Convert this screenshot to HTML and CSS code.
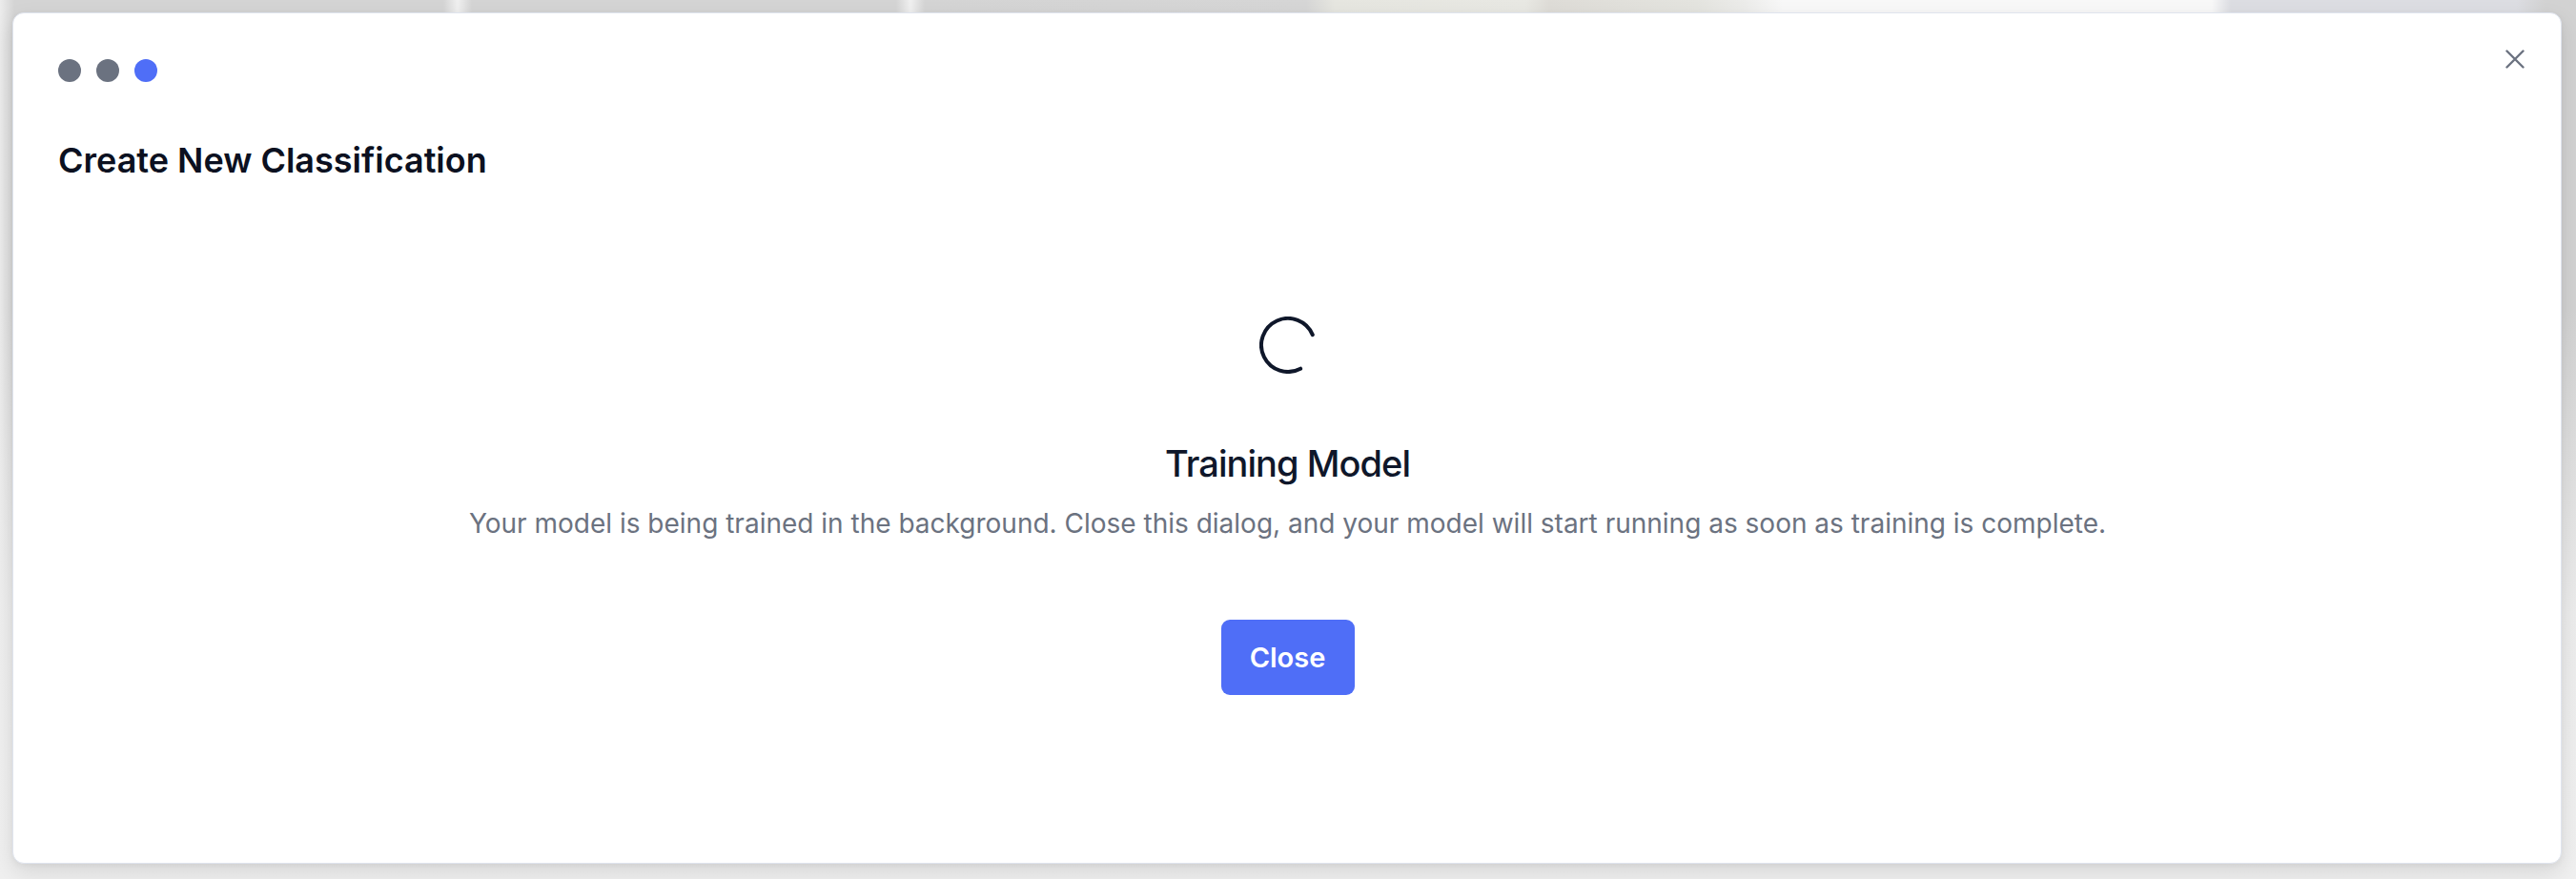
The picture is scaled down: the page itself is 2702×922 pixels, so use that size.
FILE: index.html
```html
<!DOCTYPE html>
<html lang="en">
<head>
<meta charset="utf-8">
<title>Create New Classification</title>
<link rel="stylesheet" href="styles.css">
</head>
<body>
<div class="backdrop">
  <div class="modal">
    <button class="close-x" aria-label="Close">
      <svg width="20" height="20" viewBox="0 0 20 20" fill="none" stroke="#6b7280" stroke-width="2.4" stroke-linecap="round"><path d="M1.5 1.5 L18.5 18.5 M18.5 1.5 L1.5 18.5"/></svg>
    </button>
    <div class="steps">
      <span class="dot"></span>
      <span class="dot"></span>
      <span class="dot active"></span>
    </div>
    <h2 class="title">Create New Classification</h2>
    <div class="content">
      <svg class="spinner" width="60" height="60" viewBox="0 0 60 60" fill="none" stroke="#0f172a" stroke-width="4" stroke-linecap="round"><path d="M43.1 54.7 A28 28 0 1 1 55.8 19.1"/></svg>
      <h3 class="heading">Training Model</h3>
      <p class="desc">Your model is being trained in the background. Close this dialog, and your model will start running as soon as training is complete.</p>
      <button class="btn">Close</button>
    </div>
  </div>
</div>
</body>
</html>
```

FILE: styles.css
```css
* { box-sizing: border-box; }
html, body { margin: 0; padding: 0; }
body {
  width: 2702px;
  height: 922px;
  overflow: hidden;
  font-family: "Inter", "Liberation Sans", sans-serif;
}
.backdrop {
  width: 2702px;
  height: 922px;
  padding: 13px 15px 16px 13px;
  background:
    linear-gradient(to bottom, rgba(239,239,239,0) 0%, rgba(239,239,239,0) 35%, rgba(239,239,239,0.9) 70%, #f0f0f0 100%),
    linear-gradient(to right,
      #ececec 0px, #d4d4d4 15px, #d4d4d4 465px, #f0f0f0 480px, #d4d4d4 495px,
      #d4d4d4 940px, #f0f0f0 955px, #d4d4d4 970px, #d6d6d6 1370px,
      #e6e6e0 1400px, #e8e8e3 1600px, #dedcd7 1625px, #e4e4df 1780px,
      #ececea 1830px, #f8f8f8 1870px, #f8f8f8 2320px, #dcdde2 2340px,
      #dcdde2 2640px, #d2d2d2 2670px);
}
.modal {
  position: relative;
  height: 100%;
  background: #ffffff;
  border: 1px solid #dfe4ee;
  border-radius: 12px;
  box-shadow: 0 10px 24px rgba(0,0,0,0.10), 0 2px 6px rgba(0,0,0,0.05);
  padding: 48px 46px 0 47px;
  display: flex;
  flex-direction: column;
}
.close-x {
  position: absolute;
  top: 38px;
  right: 38px;
  width: 20px;
  height: 20px;
  padding: 0;
  border: 0;
  background: none;
  display: flex;
}
.steps {
  display: flex;
  gap: 16px;
  height: 24px;
}
.dot {
  width: 24px;
  height: 24px;
  border-radius: 50%;
  background: #6b7280;
}
.dot.active { background: #4f6ef7; }
.title {
  margin: 60px 0 0 0;
  font-size: 36px;
  line-height: 44px;
  font-weight: 600;
  color: #0b1020;
}
.content {
  display: flex;
  flex-direction: column;
  align-items: center;
  margin-top: 142px;
}
.spinner { display: block; }
.heading {
  margin: 71px 0 0 0;
  font-size: 38px;
  line-height: 46px;
  font-weight: 500;
  letter-spacing: -0.025em;
  color: #0f172a;
}
.desc {
  margin: 22px 0 0 0;
  font-size: 28px;
  line-height: 36px;
  font-weight: 400;
  color: #6b7280;
}
.btn {
  margin-top: 83px;
  width: 140px;
  height: 79px;
  border: 0;
  border-radius: 9px;
  background: #4f6ef7;
  color: #ffffff;
  font-family: "Inter", "Liberation Sans", sans-serif;
  font-size: 29px;
  font-weight: 600;
  padding: 0;
}
```
